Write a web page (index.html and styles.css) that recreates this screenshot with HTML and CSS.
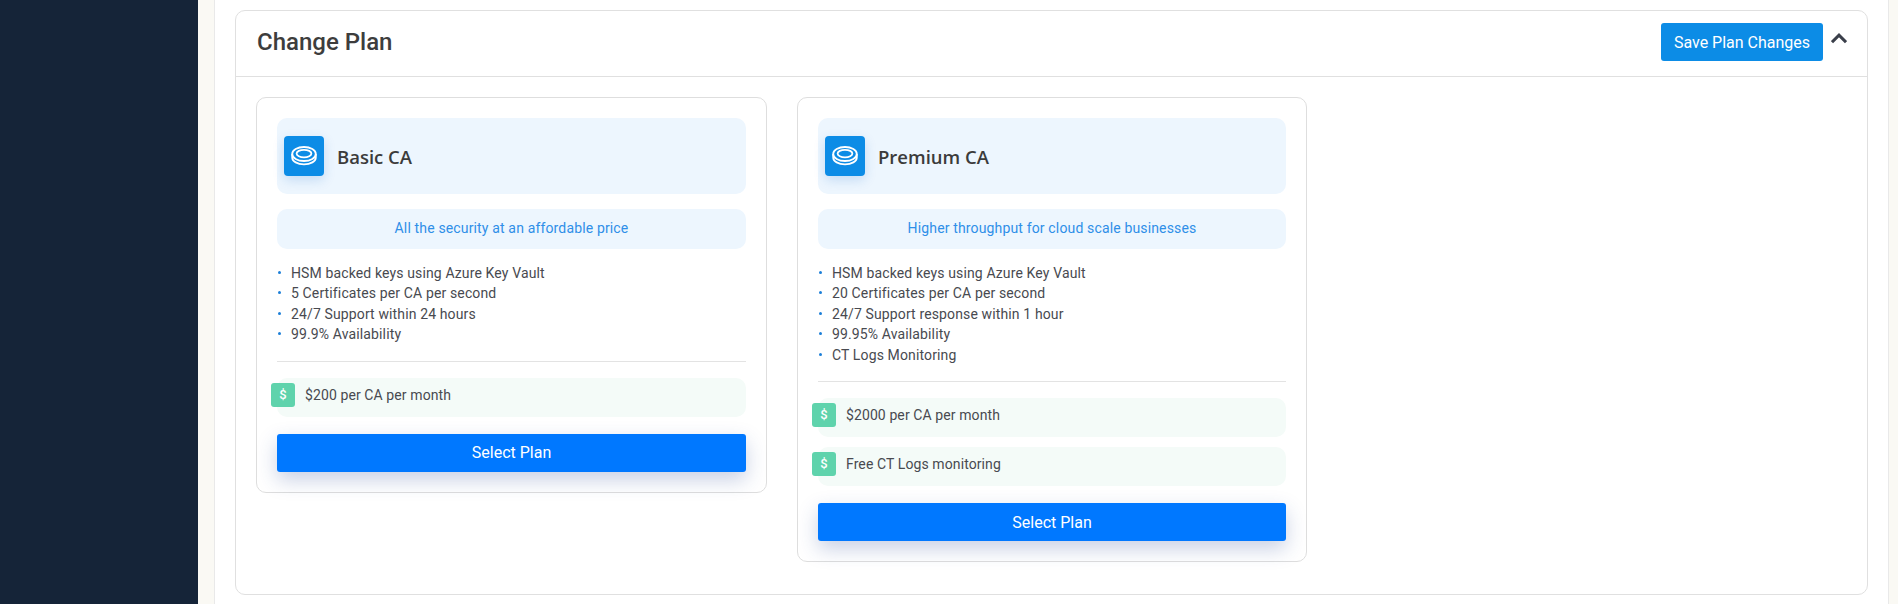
FILE: index.html
```html
<!DOCTYPE html>
<html lang="en">
<head>
<meta charset="utf-8">
<title>Change Plan</title>
<link rel="stylesheet" href="styles.css">
</head>
<body>
<div class="shell">
  <aside class="sidebar"></aside>
  <main class="content">
    <section class="panel">
      <header class="panel-head">
        <h2 class="panel-title">Change Plan</h2>
        <div class="panel-actions">
          <button class="save-btn" type="button">Save Plan Changes</button>
          <svg class="chevron" width="16" height="11" viewBox="0 0 16 11"><path d="M1 9.2 8 2.2l7 7" fill="none" stroke="#3a3f4a" stroke-width="3"/></svg>
        </div>
      </header>
      <div class="plans">
        <article class="plan">
          <div class="plan-head">
            <span class="plan-icon">
              <svg width="26" height="20" viewBox="0 0 26 20" fill="none" stroke="#fff" stroke-width="1.8"><ellipse cx="13" cy="8" rx="11.8" ry="7"/><ellipse cx="13" cy="7.6" rx="7.4" ry="3.8"/><path d="M1.2 8v3.4c0 3.9 5.3 7 11.8 7s11.8-3.1 11.8-7V8"/></svg>
            </span>
            <h3 class="plan-name">Basic CA</h3>
          </div>
          <p class="plan-tagline">All the security at an affordable price</p>
          <ul class="features">
            <li>HSM backed keys using Azure Key Vault</li>
            <li>5 Certificates per CA per second</li>
            <li>24/7 Support within 24 hours</li>
            <li>99.9% Availability</li>
          </ul>
          <hr class="divider">
          <div class="price"><span class="badge">$</span><span class="price-text">$200 per CA per month</span></div>
          <button class="select-btn" type="button">Select Plan</button>
        </article>
        <article class="plan">
          <div class="plan-head">
            <span class="plan-icon">
              <svg width="26" height="20" viewBox="0 0 26 20" fill="none" stroke="#fff" stroke-width="1.8"><ellipse cx="13" cy="8" rx="11.8" ry="7"/><ellipse cx="13" cy="7.6" rx="7.4" ry="3.8"/><path d="M1.2 8v3.4c0 3.9 5.3 7 11.8 7s11.8-3.1 11.8-7V8"/></svg>
            </span>
            <h3 class="plan-name">Premium CA</h3>
          </div>
          <p class="plan-tagline">Higher throughput for cloud scale businesses</p>
          <ul class="features">
            <li>HSM backed keys using Azure Key Vault</li>
            <li>20 Certificates per CA per second</li>
            <li>24/7 Support response within 1 hour</li>
            <li>99.95% Availability</li>
            <li>CT Logs Monitoring</li>
          </ul>
          <hr class="divider">
          <div class="price"><span class="badge">$</span><span class="price-text">$2000 per CA per month</span></div>
          <div class="price"><span class="badge">$</span><span class="price-text">Free CT Logs monitoring</span></div>
          <button class="select-btn" type="button">Select Plan</button>
        </article>
      </div>
    </section>
  </main>
</div>
</body>
</html>
```
FILE: styles.css
```css
* { box-sizing: border-box; }
html, body { margin: 0; height: 100%; overflow: hidden; }
body { font-family: Roboto, "Liberation Sans", sans-serif; color: #3f4147; background: #fff; }
.shell { display: flex; height: 604px; background: #faf9f4; padding-right: 10px; }
.sidebar { width: 198px; flex: none; background: #152438; }
.content { flex: 1; margin-left: 16px; background: #fff; border-left: 1px solid #e9e9e9; border-right: 1px solid #e9e9e9; padding: 10px 20px 0 20px; }
.panel { height: 585px; border: 1px solid #e0e0e0; border-radius: 10px; background: #fff; }
.panel-head { height: 66px; display: flex; justify-content: space-between; border-bottom: 1px solid #e0e0e0; padding: 12px 20px 0 21px; }
.panel-title { margin: 4px 0 0; font-size: 24px; line-height: 30px; font-weight: 500; color: #3d3d3d; }
.panel-actions { display: flex; gap: 8px; align-items: flex-start; }
.save-btn { width: 162px; height: 38px; border: 0; border-radius: 3px; background: #0c8ce6; color: #fff; font: 400 16px Roboto, sans-serif; padding: 0; }
.chevron { margin-top: 10px; }
.plans { display: grid; grid-template-columns: 511px 510px 510px; gap: 30px; align-items: start; padding: 20px 20px 0; }
.plan { border: 1px solid #dedede; border-radius: 10px; padding: 20px; background: #fff; }
.plan-head { height: 76px; background: #edf6fe; border-radius: 10px; display: flex; align-items: center; padding-left: 7px; }
.plan-icon { width: 40px; height: 40px; border-radius: 4px; background: #0c8ce6; box-shadow: 0 4px 12px rgba(12,100,200,.18); display: flex; align-items: center; justify-content: center; }
.plan-name { margin: 0 0 0 13px; font: 600 18.5px "Open Sans", sans-serif; letter-spacing: 0; color: #3b3b3b; }
.plan-tagline { margin: 15px 0 0; height: 40px; background: #edf6fe; border-radius: 10px; color: #2f8fe8; font-size: 14px; letter-spacing: .15px; line-height: 38px; text-align: center; }
.features { list-style: none; margin: 14px 0 0; padding: 0; font-size: 14px; letter-spacing: .13px; line-height: 20.4px; color: #484a50; }
.features li { padding-left: 14px; position: relative; }
.features li::before { content: ""; position: absolute; left: 1px; top: 8px; width: 3px; height: 3px; border-radius: 50%; background: #1c7fd8; }
.divider { border: 0; border-top: 1px solid #e3e3e3; margin: 16px 0 16px; }
.price { height: 39px; background: #f4fbf8; border-radius: 10px; display: flex; margin-bottom: 10px; }
.price:last-of-type { margin-bottom: 17px; }
.badge { width: 24px; height: 24px; margin: 5px 0 0 -6px; background: #5fd3ac; border-radius: 3px; color: #fff; font-size: 13px; font-weight: 500; line-height: 23px; text-align: center; }
.price-text { margin-left: 10px; font-size: 14px; letter-spacing: .1px; line-height: 34px; color: #484a50; }
.select-btn { display: block; width: 100%; height: 38px; border: 0; border-radius: 3px; background: #0078ff; color: #fff; font: 400 16px Roboto, sans-serif; box-shadow: 0 8px 20px rgba(40,70,150,.25); }
```
